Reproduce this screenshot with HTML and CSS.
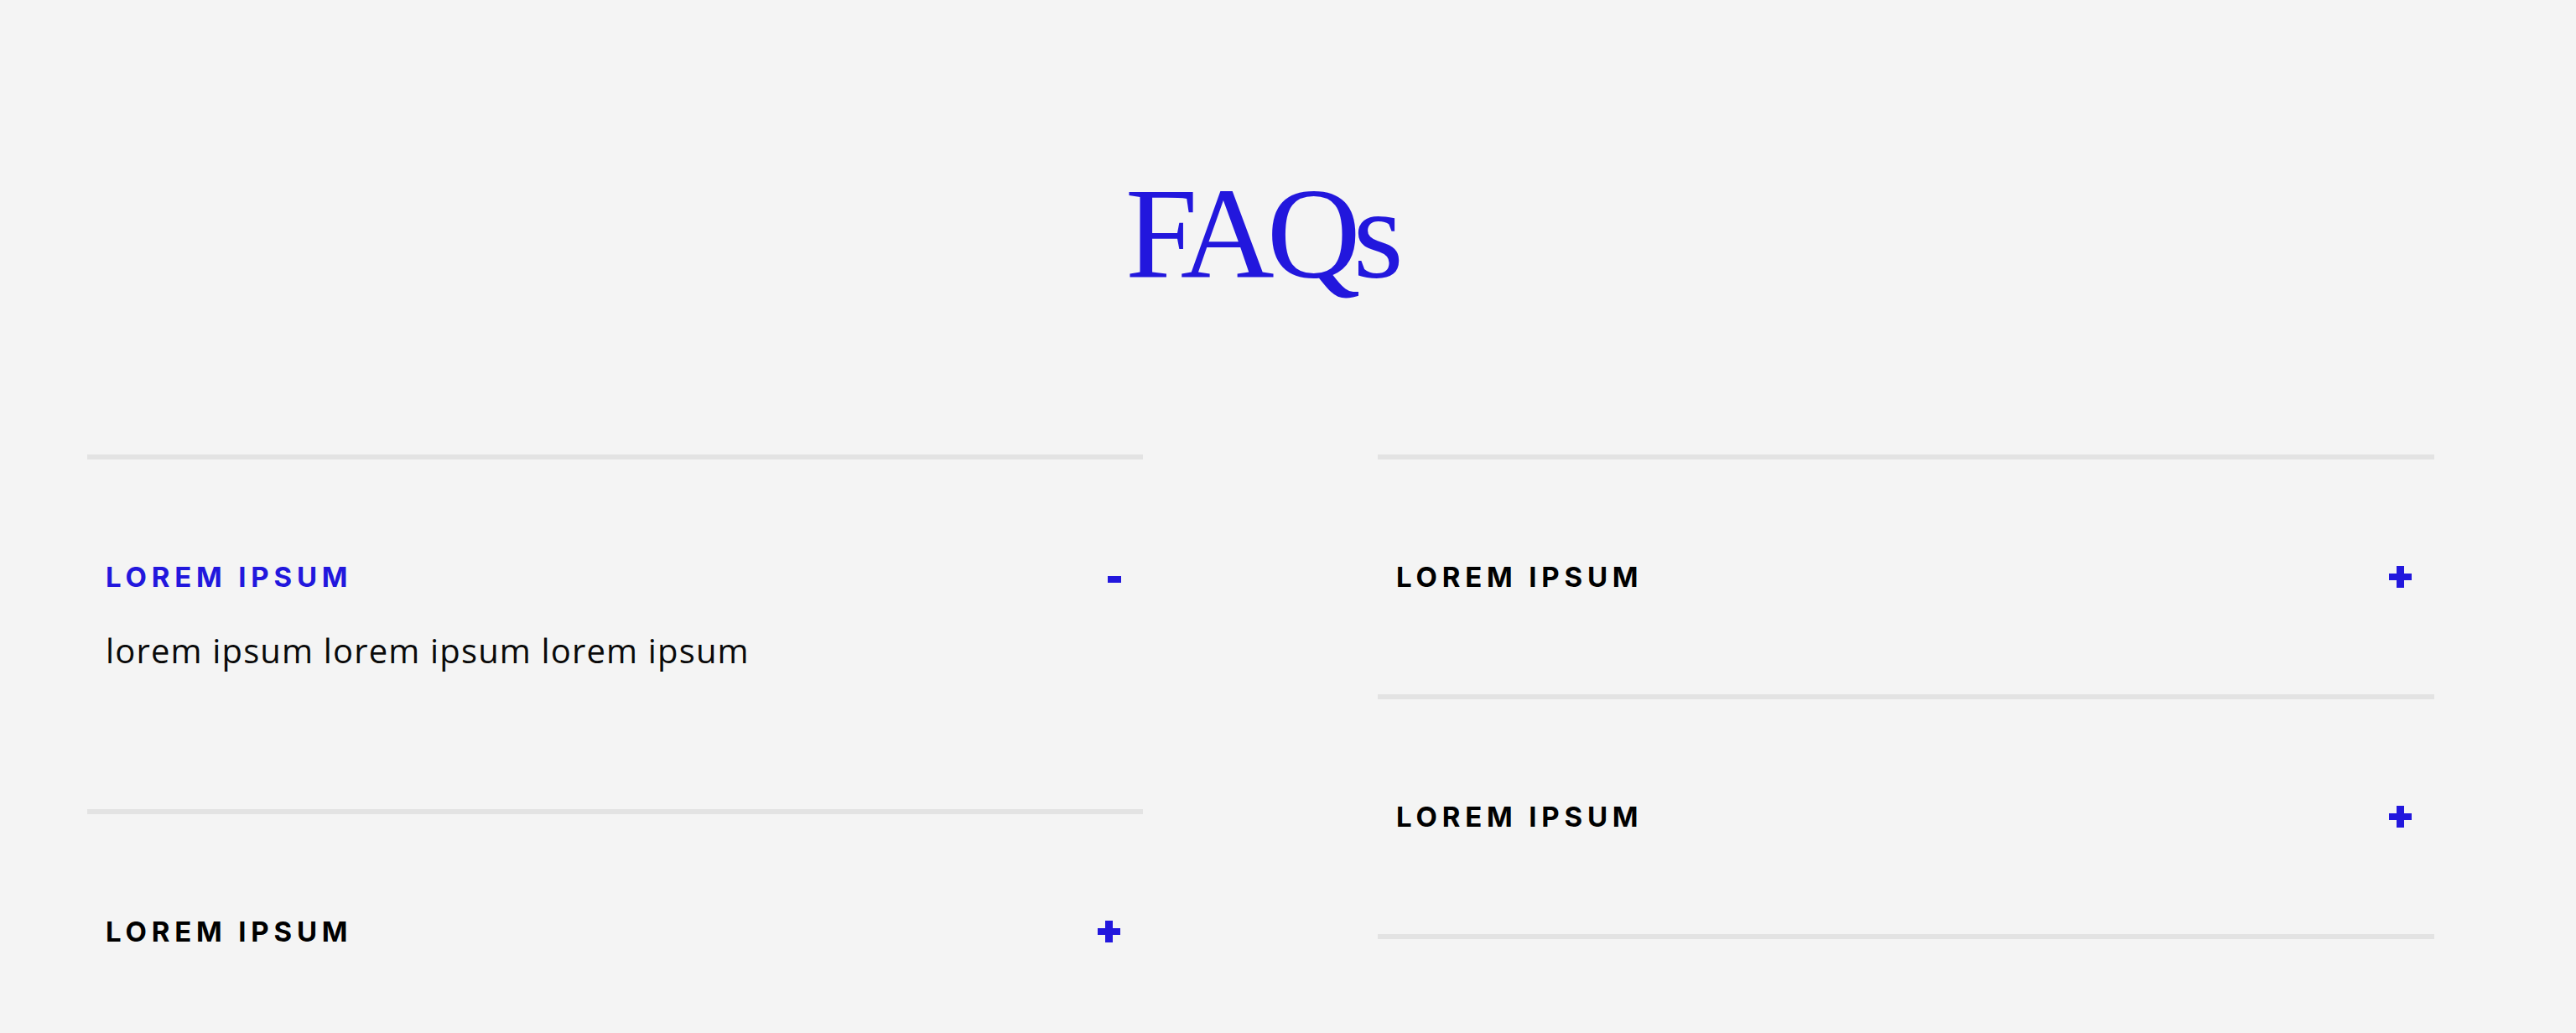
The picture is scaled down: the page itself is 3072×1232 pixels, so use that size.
FILE: index.html
```html
<!DOCTYPE html>
<html lang="en">
<head>
<meta charset="utf-8">
<title>FAQs</title>
<link rel="stylesheet" href="styles.css">
</head>
<body>
<main class="wrap">
  <h1 class="title">FAQs</h1>
  <section class="faq-grid">
    <div class="faq-col">
      <div class="faq-item open">
        <div class="faq-head">
          <span class="faq-q">LOREM IPSUM</span>
          <span class="faq-icon"><span class="minus"></span></span>
        </div>
        <p class="faq-a">lorem ipsum lorem ipsum lorem ipsum</p>
      </div>
      <div class="faq-item">
        <div class="faq-head">
          <span class="faq-q">LOREM IPSUM</span>
          <span class="faq-icon"><svg class="plus" width="27" height="26" viewBox="0 0 27 26"><rect x="9" y="0" width="9" height="26"/><rect x="0" y="9" width="27" height="8"/></svg></span>
        </div>
      </div>
    </div>
    <div class="faq-col">
      <div class="faq-item">
        <div class="faq-head">
          <span class="faq-q">LOREM IPSUM</span>
          <span class="faq-icon"><svg class="plus" width="27" height="26" viewBox="0 0 27 26"><rect x="9" y="0" width="9" height="26"/><rect x="0" y="9" width="27" height="8"/></svg></span>
        </div>
      </div>
      <div class="faq-item">
        <div class="faq-head">
          <span class="faq-q">LOREM IPSUM</span>
          <span class="faq-icon"><svg class="plus" width="27" height="26" viewBox="0 0 27 26"><rect x="9" y="0" width="9" height="26"/><rect x="0" y="9" width="27" height="8"/></svg></span>
        </div>
      </div>
    </div>
  </section>
</main>
</body>
</html>
```
FILE: styles.css
```css
html, body {
  margin: 0;
  padding: 0;
  background: #f4f4f4;
}
body {
  font-family: "Open Sans", "Liberation Sans", sans-serif;
  color: #111;
  overflow: hidden;
}
.wrap {
  width: 2799px;
  margin-left: 104px;
}
.title {
  margin: 0;
  padding-top: 201px;
  font-family: "Liberation Serif", "DejaVu Serif", serif;
  font-weight: 400;
  font-size: 155px;
  line-height: 155px;
  letter-spacing: -9px;
  text-align: center;
  color: #2217dd;
}
.faq-grid {
  margin-top: 186px;
  display: grid;
  grid-template-columns: 1259px 1260px;
  column-gap: 280px;
  align-items: start;
}
.faq-item {
  border-top: 6px solid #e3e3e3;
  padding: 125px 27px 125px 22px;
}
.faq-item:last-child {
  border-bottom: 6px solid #e3e3e3;
}
.faq-head {
  display: flex;
  justify-content: space-between;
  align-items: center;
  height: 30px;
}
.faq-q {
  font-family: "Inter", "Liberation Sans", sans-serif;
  font-weight: 700;
  font-size: 33px;
  line-height: 29px;
  letter-spacing: 5.8px;
  color: #000;
}
.open .faq-q {
  color: #2217dd;
}
.faq-icon {
  width: 27px;
  height: 26px;
  display: flex;
  justify-content: flex-end;
  align-items: center;
}
.minus {
  display: block;
  width: 16px;
  height: 8px;
  margin-top: 6px;
  margin-right: -1px;
  background: #2217dd;
}
.plus {
  display: block;
  fill: #2217dd;
}
.faq-a {
  margin: 46px 0 0;
  padding-bottom: 37px;
  font-size: 40px;
  line-height: 54px;
  letter-spacing: 1.15px;
  color: #0a0a0a;
}
```
